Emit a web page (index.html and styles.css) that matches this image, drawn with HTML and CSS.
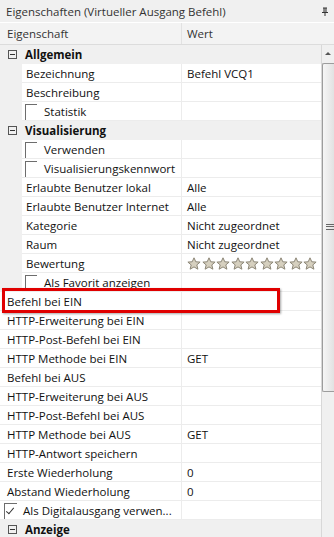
FILE: index.html
```html
<!DOCTYPE html>
<html>
<head>
    <title>Eigenschaften</title>
    <link rel="stylesheet" href="styles.css">
</head>
<body>

<div class="panel">
    <div class="titlebar">
        <span>Eigenschaften (Virtueller Ausgang Befehl)</span>
        <svg class="pin" width="8" height="9" viewBox="0 0 8 9">
            <path d="M2 0.5h4v1H5.5v3.5H7v1H4.5V9h-1V6H1V5h1.5V1.5H2z" fill="#333"/>
            <path d="M4 1.5v3.5" stroke="#fff" stroke-width="0.8"/>
        </svg>
    </div>
    <div class="header">
        <div class="col-name">Eigenschaft</div>
        <div class="col-value">Wert</div>
    </div>

    <div class="body">
        <div class="grid">
            <div class="row category"><span class="toggle"></span>Allgemein</div>
            <div class="row child"><div class="name">Bezeichnung</div><div class="value">Befehl VCQ1</div></div>
            <div class="row child"><div class="name">Beschreibung</div><div class="value"></div></div>
            <div class="row child"><div class="name"><span class="box"></span>Statistik</div><div class="value"></div></div>

            <div class="row category"><span class="toggle"></span>Visualisierung</div>
            <div class="row child"><div class="name"><span class="box"></span>Verwenden</div><div class="value"></div></div>
            <div class="row child"><div class="name"><span class="box"></span>Visualisierungskennwort</div><div class="value"></div></div>
            <div class="row child"><div class="name">Erlaubte Benutzer lokal</div><div class="value">Alle</div></div>
            <div class="row child"><div class="name">Erlaubte Benutzer Internet</div><div class="value">Alle</div></div>
            <div class="row child"><div class="name">Kategorie</div><div class="value">Nicht zugeordnet</div></div>
            <div class="row child"><div class="name">Raum</div><div class="value">Nicht zugeordnet</div></div>
            <div class="row child"><div class="name">Bewertung</div><div class="value stars" id="stars"></div></div>
            <div class="row child"><div class="name"><span class="box"></span>Als Favorit anzeigen</div><div class="value"></div></div>

            <div class="row"><div class="name">Befehl bei EIN</div><div class="value"></div></div>
            <div class="row"><div class="name">HTTP-Erweiterung bei EIN</div><div class="value"></div></div>
            <div class="row"><div class="name">HTTP-Post-Befehl bei EIN</div><div class="value"></div></div>
            <div class="row"><div class="name">HTTP Methode bei EIN</div><div class="value">GET</div></div>
            <div class="row"><div class="name">Befehl bei AUS</div><div class="value"></div></div>
            <div class="row"><div class="name">HTTP-Erweiterung bei AUS</div><div class="value"></div></div>
            <div class="row"><div class="name">HTTP-Post-Befehl bei AUS</div><div class="value"></div></div>
            <div class="row"><div class="name">HTTP Methode bei AUS</div><div class="value">GET</div></div>
            <div class="row"><div class="name">HTTP-Antwort speichern</div><div class="value"></div></div>
            <div class="row"><div class="name">Erste Wiederholung</div><div class="value">0</div></div>
            <div class="row"><div class="name">Abstand Wiederholung</div><div class="value">0</div></div>
            <div class="row"><div class="name flat"><span class="box checked"></span><span>Als Digitalausgang verwen...</span></div><div class="value"></div></div>

            <div class="row category"><span class="toggle"></span>Anzeige</div>

            <div class="marker"></div>
        </div>

        <div class="scrollbar">
            <div class="arrow"></div>
            <div class="thumb"><span class="grip"></span></div>
        </div>
    </div>
</div>

<script>
    var sterne = document.getElementById("stars");
    for (var i = 0; i < 9; i++) {
        sterne.innerHTML += '<svg width="14" height="13" viewBox="0 0 14 13">' +
            '<path d="M7 0.8l1.8 4 4.3 0.3-3.3 2.8 1.1 4.3L7 9.9l-3.9 2.3 1.1-4.3L0.9 5.1l4.3-0.3z" ' +
            'fill="#d6d0bf" stroke="#8c8677" stroke-width="1"/></svg>';
    }
</script>

</body>
</html>
```

FILE: styles.css
```css
body {
    margin: 0;
    font-family: "Open Sans", "Liberation Sans", sans-serif;
    font-size: 11.5px;
    color: #111111;
    background-color: #ffffff;
}

.panel {
    width: 334px;
    height: 537px;
    overflow: hidden;
    background-color: #f0f0f0;
}

.titlebar {
    height: 22px;
    display: flex;
    align-items: center;
    justify-content: space-between;
    padding: 0 5px 0 6px;
    background-color: #f0f0f0;
    color: #333;
    border-bottom: 1px solid #ffffff;
}

.pin {
    margin-top: 1px;
}

.header {
    height: 21px;
    display: flex;
    align-items: center;
    background-color: #f3f3f3;
    border-bottom: 1px solid #dcdcdc;
    color: #333;
}

.col-name {
    width: 182px;
    padding-left: 7px;
    box-sizing: border-box;
    height: 100%;
    display: flex;
    align-items: center;
    border-right: 1px solid #e2e2e2;
}

.col-value {
    padding-left: 5px;
}

.body {
    display: flex;
}

.grid {
    position: relative;
    width: 322px;
    background-color: #ffffff;
}

.row {
    height: 19px;
    box-sizing: border-box;
    display: flex;
    border-bottom: 1px solid #ececec;
    background-color: #ffffff;
}

.row .name {
    width: 182px;
    box-sizing: border-box;
    padding-left: 7px;
    padding-right: 4px;
    display: flex;
    align-items: center;
    border-right: 1px solid #ececec;
    white-space: nowrap;
    overflow: hidden;
}

.row .value {
    flex: 1;
    padding-left: 5px;
    display: flex;
    align-items: center;
}

.row.child {
    background-color: #f0f0f0;
    border-bottom: none;
}

.row.child .name {
    width: 160px;
    margin-left: 22px;
    padding-left: 4px;
    background-color: #ffffff;
    border-bottom: 1px solid #ececec;
}

.row.child .value {
    background-color: #ffffff;
    border-bottom: 1px solid #ececec;
}

.row.category {
    background-color: #f0f0f0;
    align-items: center;
    font-weight: bold;
    border-bottom: 1px solid #f0f0f0;
    padding-left: 8px;
}

.toggle {
    width: 9px;
    height: 9px;
    border: 1px solid #555;
    box-sizing: border-box;
    margin-right: 8px;
    position: relative;
}

.toggle::after {
    content: "";
    position: absolute;
    left: 1px;
    top: 3px;
    width: 5px;
    height: 1px;
    background-color: #333;
}

.box {
    width: 12px;
    height: 17px;
    margin-top: 2px;
    align-self: flex-start;
    border-top: 1px solid #6d6d6d;
    border-left: 1px solid #6d6d6d;
    box-sizing: border-box;
    margin-right: 7px;
    margin-left: -1px;
    flex-shrink: 0;
}

.name.flat {
    padding-left: 4px;
}

.box.checked {
    width: 13px;
    margin-right: 6px;
    margin-left: 0;
    position: relative;
}

.box.checked::after {
    content: "";
    position: absolute;
    left: 3px;
    top: 2px;
    width: 3px;
    height: 7px;
    border-right: 1.5px solid #333;
    border-bottom: 1.5px solid #333;
    transform: rotate(40deg);
}

.stars {
    padding-left: 4px;
    gap: 0.5px;
}

.stars svg {
    display: block;
    flex-shrink: 0;
}

.marker {
    position: absolute;
    left: 2px;
    top: 243px;
    width: 272px;
    height: 19px;
    border: 3px solid #e00000;
    box-shadow: 1px 1px 2px rgba(0, 0, 0, 0.35);
}

.scrollbar {
    width: 12px;
    background-color: #f0f0f0;
    border-left: 1px solid #d8d8d8;
}

.arrow {
    height: 17px;
    position: relative;
}

.arrow::after {
    content: "";
    position: absolute;
    left: 3px;
    top: 7px;
    border-left: 3px solid transparent;
    border-right: 3px solid transparent;
    border-bottom: 3px solid #555;
}

.thumb {
    height: 327px;
    margin-top: 1px;
    border: 1px solid #9d9d9d;
    border-right: none;
    border-radius: 2px 0 0 2px;
    background: linear-gradient(to right, #f6f6f6, #e2e2e2);
    position: relative;
}

.grip {
    position: absolute;
    left: 3px;
    top: 160px;
    width: 8px;
    height: 6px;
    border-top: 1px solid #666;
    border-bottom: 1px solid #666;
    box-sizing: border-box;
}

.grip::after {
    content: "";
    position: absolute;
    left: 0;
    top: 1px;
    width: 8px;
    height: 1px;
    background-color: #666;
}
```
